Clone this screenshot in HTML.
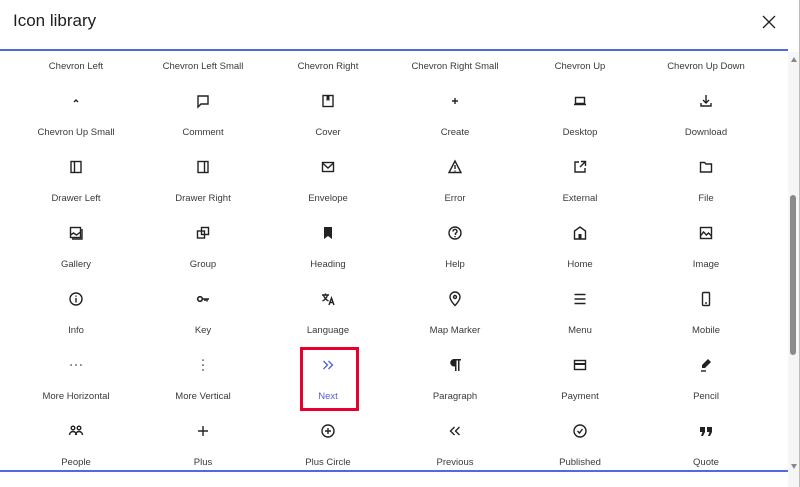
<!DOCTYPE html>
<html><head><meta charset="utf-8"><style>
*{margin:0;padding:0;box-sizing:border-box}
body{width:800px;height:487px;overflow:hidden;background:#fff;font-family:"Liberation Sans",sans-serif;position:relative;color:#333}
.t{position:absolute;left:13px;top:11px;font-size:17px;color:#1e1e1e}
.hl{position:absolute;left:0;width:788px;height:2px;background:#5468e0}
.lb{position:absolute;width:126px;text-align:center;font-size:9.5px;color:#3a3a3a;line-height:12px}
.ic{position:absolute;width:16px;height:16px}
.sb{position:absolute;left:788px;top:52px;width:11px;height:435px;background:#f6f6f6}
.th{position:absolute;left:790px;top:195px;width:6px;height:160px;background:#8a8a8a;border-radius:3px}
.br{position:absolute;left:799px;top:0;width:1px;height:487px;background:#bbb}
.red{position:absolute;left:300px;top:347px;width:59px;height:64px;border:3px solid #e8002d}
</style></head><body>
<div class="t">Icon library</div>
<svg style="position:absolute;left:762px;top:15px" width="14" height="14" viewBox="0 0 14 14"><path d="M1 1L13 13M13 1L1 13" stroke="#222" stroke-width="1.3"/></svg>
<div class="hl" style="top:49px"></div>
<div class="hl" style="top:470px"></div>
<div class="sb"></div><div class="th"></div><div class="br"></div>
<svg style="position:absolute;left:791px;top:57px" width="6" height="5"><path d="M0 5L3 0L6 5Z" fill="#888"/></svg>
<svg style="position:absolute;left:791px;top:464px" width="6" height="5"><path d="M0 0L3 5L6 0Z" fill="#888"/></svg>
<div class="red"></div>
<div id="g"></div>
<script>
var cx=[76,203,328,455,580,706];
var labels=[["Chevron Left","Chevron Left Small","Chevron Right","Chevron Right Small","Chevron Up","Chevron Up Down"],
["Chevron Up Small","Comment","Cover","Create","Desktop","Download"],
["Drawer Left","Drawer Right","Envelope","Error","External","File"],
["Gallery","Group","Heading","Help","Home","Image"],
["Info","Key","Language","Map Marker","Menu","Mobile"],
["More Horizontal","More Vertical","Next","Paragraph","Payment","Pencil"],
["People","Plus","Plus Circle","Previous","Published","Quote"]];
var S='fill="none" stroke="#222" stroke-width="1.4"';
var icons=[
['<path d="M6 9l2-2 2 2" '+S+'/>','<path d="M3 3h10v8H6l-3 3z" '+S+'/>','<rect x="3" y="2.5" width="10" height="11" '+S+'/><path d="M6.5 3h3v5l-1.5-1-1.5 1z" fill="#222"/>','<path d="M8 5v6M5 8h6" '+S+'/>','<path d="M3.5 4.5h9v6h-9zM2 11.5h12" '+S+'/>','<path d="M8 2v8M5 7l3 3 3-3M3 10v3h10v-3" '+S+'/>'],
['<rect x="3" y="2.5" width="10" height="11" '+S+'/><path d="M6.5 2.5v11" '+S+'/>','<rect x="3" y="2.5" width="10" height="11" '+S+'/><path d="M9.5 2.5v11" '+S+'/>','<rect x="2.5" y="3.5" width="11" height="9" '+S+'/><path d="M2.5 4l5.5 5 5.5-5" '+S+'/>','<path d="M8 2L2 13.5h12z M8 6v4M8 11.5v1" '+S+'/>','<path d="M7 3H3v10h10V9M9 2.5h4.5V7M13.5 2.5L8 8" '+S+'/>','<path d="M2.5 3.5h4l1.5 1.5h5.5v8h-11z" '+S+'/>'],
['<rect x="2.5" y="2.5" width="10" height="10" '+S+'/><path d="M4 14h10V4M2.5 10l3-2 3 2 4-3" '+S+'/>','<rect x="2.5" y="6" width="7" height="7" '+S+'/><rect x="6.5" y="2.5" width="7" height="7" '+S+'/>','<path d="M4 2h8v12l-4-3-4 3z" fill="#222"/>','<circle cx="8" cy="8" r="6" '+S+'/><path d="M6 6.5a2 2 0 1 1 2.5 1.8V10M8 11v1.2" '+S+'/>','<path d="M2.5 14V6L8 2l5.5 4v8z" '+S+'/><rect x="6.5" y="9" width="3" height="5" fill="#222"/>','<rect x="2.5" y="2.5" width="11" height="11" '+S+'/><path d="M2.5 11l3-4 3 3 2-2 3 3" '+S+'/>'],
['<circle cx="8" cy="8" r="6" '+S+'/><path d="M8 7v4.5M8 4.5v1.2" '+S+'/>','<circle cx="5" cy="8" r="2.3" fill="none" stroke="#222" stroke-width="1.6"/><path d="M7 8h7M12 8v2.5M10 8v2" stroke="#222" stroke-width="1.6"/>','<path d="M2 4h7M5.5 2.5V4M3.5 4q1 4 5 6M7.5 4q-1 4-5 6M9 14l2.5-7 2.5 7M10 11.5h3" '+S+'/>','<path d="M8 14.5s-5-5-5-8.5a5 5 0 0 1 10 0c0 3.5-5 8.5-5 8.5z" '+S+'/><circle cx="8" cy="6" r="1.5" '+S+'/>','<path d="M2.5 3.5h11M2.5 8h11M2.5 12.5h11" '+S+'/>','<rect x="4.5" y="1.5" width="7" height="13" rx="1" '+S+'/><path d="M7 12h2" '+S+'/>'],
['<path d="M2.5 8h1.2M7.4 8h1.2M12.3 8h1.2" stroke="#222" stroke-width="1.4"/>','<path d="M8 2.5v1.3M8 7.4v1.3M8 12.3v1.3" stroke="#222" stroke-width="1.4"/>','<path d="M3.5 4l4 4-4 4M8.5 4l4 4-4 4" fill="none" stroke="#4d5fe0" stroke-width="1.3"/>','<path d="M7 2h7v1.5h-1.5V14H11V3.5H9.5V14H8V9.5H7a3.75 3.75 0 0 1 0-7.5z" fill="#222"/>','<rect x="2.5" y="3.5" width="11" height="9" '+S+'/><rect x="2.5" y="6" width="11" height="2" fill="#222"/>','<path d="M10 2l3 3-6 6-3 0 0-3z" fill="#222"/><path d="M3 14h5" '+S+'/>'],
['<circle cx="5" cy="5" r="1.8" '+S+'/><circle cx="11" cy="5" r="1.8" '+S+'/><path d="M1.5 12a3.5 3.5 0 0 1 7 0M7.5 12a3.5 3.5 0 0 1 7 0" '+S+'/>','<path d="M8 3v10M3 8h10" '+S+'/>','<circle cx="8" cy="8" r="6" '+S+'/><path d="M8 5v6M5 8h6" '+S+'/>','<path d="M7.5 4l-4 4 4 4M12.5 4l-4 4 4 4" '+S+'/>','<circle cx="8" cy="8" r="6" '+S+'/><path d="M5.5 8l2 2 3-4" '+S+'/>','<path d="M2 4h5v5l-2 4H3l1.5-4H2zM9 4h5v5l-2 4h-2l1.5-4H9z" fill="#222"/>']];
var h='';
for(var r=0;r<7;r++){for(var c=0;c<6;c++){
 var ly=61+r*66;
 var col=(r==5&&c==2)?' style="left:'+(cx[c]-63)+'px;top:'+ly+'px;color:#4d5fe0"':' style="left:'+(cx[c]-63)+'px;top:'+ly+'px"';
 h+='<div class="lb"'+col+'>'+labels[r][c]+'</div>';
 if(r<6){var iy=101+r*66;h+='<svg class="ic" viewBox="0 0 16 16" style="left:'+(cx[c]-8)+'px;top:'+(iy-8)+'px">'+icons[r][c]+'</svg>';}
}}
document.getElementById('g').innerHTML=h;
</script>
</body></html>
